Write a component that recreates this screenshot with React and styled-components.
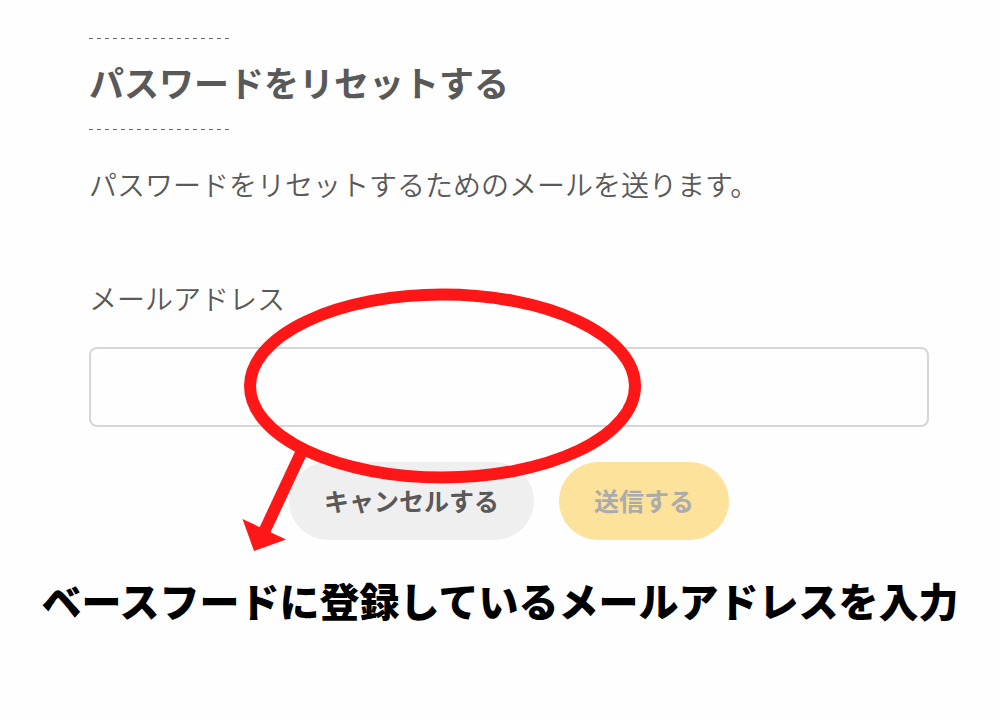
import styled, { createGlobalStyle } from 'styled-components';
import { useState } from 'react';

const GlobalStyle = createGlobalStyle`
  * {
    box-sizing: border-box;
  }

  body {
    margin: 0;
    background: #fefefe;
    color: #595959;
    font-family: 'Noto Sans CJK JP', sans-serif;
  }
`;

const Page = styled.main`
  display: flex;
  flex-direction: column;
  gap: 30px;
  padding: 38px 0 48px;
`;

const ResetPanel = styled.section`
  padding: 0 71px 0 89px;
`;

const DashedLine = styled.div`
  width: 142px;
  height: 1px;
  background: repeating-linear-gradient(to right, #6a6a6a 0 4px, transparent 4px 8px);
`;

const Title = styled.h1`
  margin: 0;
  padding: 18px 0 22px;
  font-size: 35px;
  line-height: 50px;
  font-weight: 700;
`;

const Lead = styled.p`
  margin: 34px 0 74px;
  font-size: 28px;
  line-height: 40px;
  font-weight: 350;
`;

const Label = styled.label`
  display: block;
  margin-bottom: 29px;
  font-size: 28px;
  line-height: 40px;
  font-weight: 350;
`;

const Field = styled.div`
  position: relative;
  margin-bottom: 35px;
`;

const Input = styled.input`
  display: block;
  width: 100%;
  height: 80px;
  padding: 0 24px;
  border: 2px solid #d6d6d6;
  border-radius: 8px;
  background: #fefefe;
  color: inherit;
  font-family: inherit;
  font-size: 28px;

  &:focus {
    outline: none;
    border-color: #999;
  }
`;

const Marker = styled.svg`
  position: absolute;
  left: 151px;
  top: -61px;
  width: 404px;
  height: 270px;
  color: #ff1616;
  pointer-events: none;
  z-index: 1;
`;

const Actions = styled.div`
  display: flex;
  justify-content: center;
  gap: 25px;
`;

const Button = styled.button`
  padding: 20px 35px 22px;
  border: none;
  border-radius: 39px;
  background: ${({ $primary }) => ($primary ? '#fce29a' : '#efefef')};
  color: ${({ $primary }) => ($primary ? '#ababab' : '#595959')};
  font-family: inherit;
  font-size: 25px;
  line-height: 36px;
  font-weight: 700;
  white-space: nowrap;
`;

const Caption = styled.p`
  margin: 0;
  color: #000;
  font-size: 40px;
  line-height: 60px;
  font-weight: 900;
  text-align: center;
`;

// Red ellipse around the field, with an arrow down to the caption
const HighlightMarker = () => (
  <Marker viewBox="0 0 404 270" aria-hidden="true">
    <ellipse cx="202.5" cy="100" rx="192.5" ry="91.5" fill="none" stroke="currentColor" strokeWidth="12" />
    <path d="M61 167L24 246" stroke="currentColor" strokeWidth="12" />
    <path d="M2.5 233L46 253.5L14 265Z" fill="currentColor" />
  </Marker>
);

const App = () => {
  const [email, setEmail] = useState('');

  const handleSubmit = (e) => {
    e.preventDefault();
  };

  return (
    <>
      <GlobalStyle />
      <Page>
        <ResetPanel>
          <DashedLine />
          <Title>パスワードをリセットする</Title>
          <DashedLine />
          <Lead>パスワードをリセットするためのメールを送ります。</Lead>
          <form onSubmit={handleSubmit}>
            <Label htmlFor="email">メールアドレス</Label>
            <Field>
              <Input
                id="email"
                type="email"
                value={email}
                onChange={(e) => setEmail(e.target.value)}
              />
              <HighlightMarker />
            </Field>
            <Actions>
              <Button type="button" onClick={() => setEmail('')}>キャンセルする</Button>
              <Button type="submit" $primary disabled={!email}>送信する</Button>
            </Actions>
          </form>
        </ResetPanel>
        <Caption>ベースフードに登録しているメールアドレスを入力</Caption>
      </Page>
    </>
  );
};

export default App;
